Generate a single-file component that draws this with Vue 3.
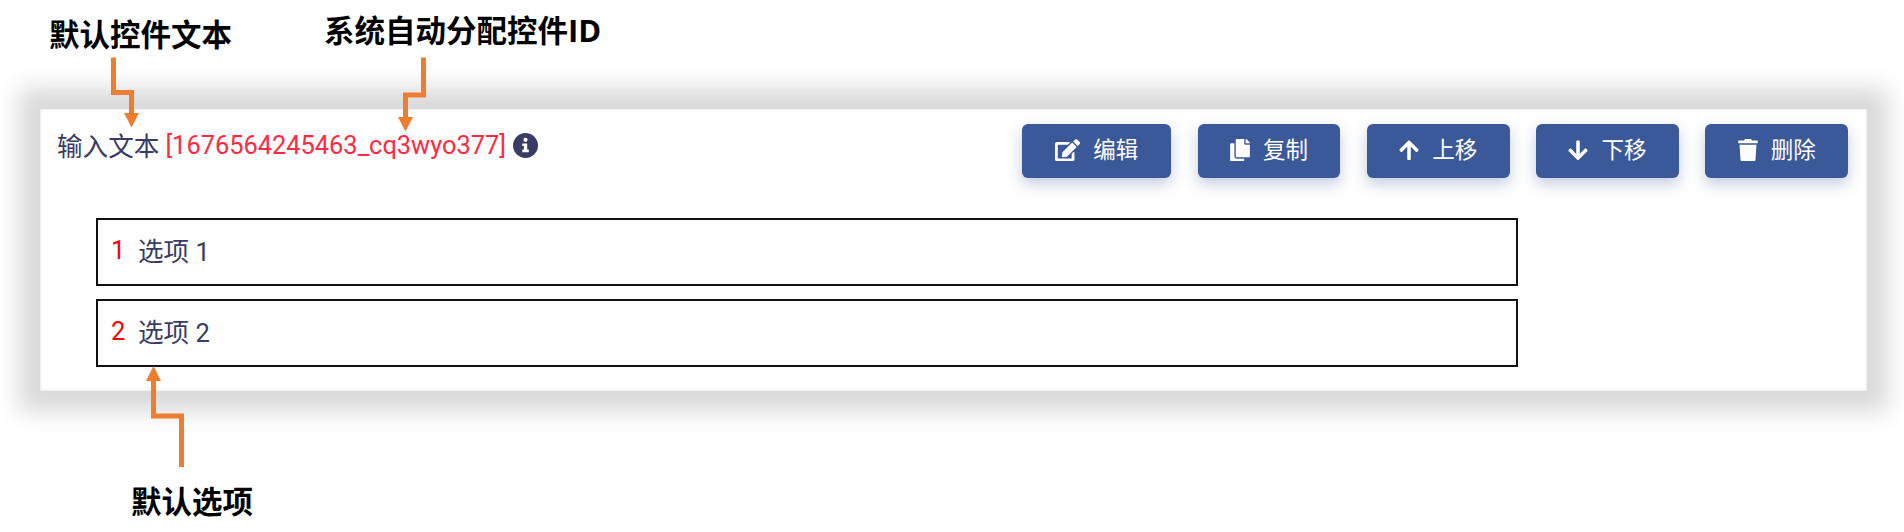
<script setup>
const buttons = [
  { label: '编辑', icon: 'edit', wide: true },
  { label: '复制', icon: 'copy' },
  { label: '上移', icon: 'up' },
  { label: '下移', icon: 'down' },
  { label: '删除', icon: 'trash' },
]
const options = [
  { id: 1, text: '选项 1' },
  { id: 2, text: '选项 2' },
]
</script>

<template>
  <main class="stage">
    <section class="panel">
      <header class="head">
        <div class="title">
          <span class="caption">输入文本</span>
          <span class="uid">[1676564245463_cq3wyo377]</span>
          <svg class="info" viewBox="0 0 25 25">
            <circle cx="12.5" cy="12.5" r="12.5" fill="#3a3c63" />
            <circle cx="12.5" cy="6.8" r="2.1" fill="#fff" />
            <path d="M9.3 10.5h4.9v6.1h1.6v2.6H9.3v-2.6h1.6v-3.5H9.3z" fill="#fff" />
          </svg>
        </div>
        <div class="actions">
          <button v-for="b in buttons" :key="b.icon" class="btn" :class="{ wide: b.wide }">
            <svg v-if="b.icon === 'edit'" class="ic edit" viewBox="0 0 576 512">
              <path d="M402.6 83.2l90.2 90.2c3.8 3.8 3.800 10 0 13.800L274.400 405.600l-92.800 10.300c-12.400 1.400-22.900-9.100-21.500-21.500l10.300-92.800L388.800 83.200c3.800-3.800 10-3.800 13.800 0zm162-22.900l-48.800-48.800c-15.200-15.200-39.900-15.200-55.200 0l-35.400 35.400c-3.800 3.800-3.800 10 0 13.800l90.200 90.200c3.800 3.800 10 3.800 13.800 0l35.400-35.400c15.200-15.300 15.200-40 0-55.200zM384 346.200V448H64V128h229.800c3.200 0 6.200-1.300 8.500-3.500l40-40c7.600-7.600 2.200-20.500-8.500-20.500H48C21.500 64 0 85.500 0 112v352c0 26.500 21.500 48 48 48h352c26.500 0 48-21.500 48-48V306.200c0-10.700-12.900-16-20.500-8.500l-40 40c-2.200 2.300-3.500 5.300-3.500 8.500z" />
            </svg>
            <svg v-else-if="b.icon === 'copy'" class="ic" viewBox="0 0 448 512">
              <path d="M320 448v40c0 13.255-10.745 24-24 24H24c-13.255 0-24-10.745-24-24V120c0-13.255 10.745-24 24-24h72v296c0 30.879 25.121 56 56 56h168zm0-344V0H152c-13.255 0-24 10.745-24 24v368c0 13.255 10.745 24 24 24h272c13.255 0 24-10.745 24-24V128H344c-13.200 0-24-10.800-24-24zm120.971-31.029L375.029 7.029A24 24 0 0 0 358.059 0H352v96h96v-6.059a24 24 0 0 0-7.029-16.970z" />
            </svg>
            <svg v-else-if="b.icon === 'trash'" class="ic" viewBox="0 0 448 512">
              <path d="M432 32H312l-9.400-18.700A24 24 0 0 0 281.100 0H166.800a23.720 23.720 0 0 0-21.400 13.300L136 32H16A16 16 0 0 0 0 48v32a16 16 0 0 0 16 16h416a16 16 0 0 0 16-16V48a16 16 0 0 0-16-16zM53.200 467a48 48 0 0 0 47.900 45h245.800a48 48 0 0 0 47.900-45L416 128H32z" />
            </svg>
            <svg v-else class="ic" :class="b.icon" viewBox="0 0 448 512">
              <path d="M34.900 289.500l-22.200-22.200c-9.400-9.400-9.400-24.600 0-33.900L207 39c9.400-9.400 24.600-9.400 33.900 0l194.300 194.300c9.400 9.400 9.400 24.600 0 33.900L413 289.400c-9.500 9.500-25 9.300-34.300-.4L264 168.600V456c0 13.300-10.700 24-24 24h-32c-13.300 0-24-10.700-24-24V168.600L69.200 289.100c-9.300 9.800-24.800 10-34.300.4z" />
            </svg>
            <span>{{ b.label }}</span>
          </button>
        </div>
      </header>
      <ul class="options">
        <li v-for="o in options" :key="o.id">
          <span class="num">{{ o.id }}</span>
          <span>{{ o.text }}</span>
        </li>
      </ul>
    </section>

    <strong class="note n1">默认控件文本</strong>
    <strong class="note n2">系统自动分配控件<span class="latin">ID</span></strong>
    <strong class="note n3">默认选项</strong>
    <svg class="arrows" viewBox="0 0 1904 532">
      <g fill="none" stroke="#ed7d31" stroke-width="5">
        <path d="M113.500 57.500V92.500H131.500V114" />
        <path d="M423.500 57.500V95H405.500V118" />
        <path d="M181.500 467V416H153.500V380" />
      </g>
      <g fill="#ed7d31">
        <path d="M124 113h15l-7.500 14.500z" />
        <path d="M398 117h15l-7.500 14.500z" />
        <path d="M146 381h15l-7.500-15z" />
      </g>
    </svg>
  </main>
</template>

<style>
body { background: #fff; }
</style>

<style scoped>
.stage {
  position: relative;
  box-sizing: border-box;
  width: 1904px;
  height: 532px;
  padding: 109px 37px 141px 40px;
  overflow: hidden;
  background: #fff;
  font-family: Roboto, "Noto Sans CJK SC", sans-serif;
  color: #3a3c63;
}
.panel {
  box-sizing: border-box;
  height: 282px;
  padding: 15px 19px 0 17px;
  background: #fefefe;
  box-shadow: 0 0 22px 21px #dadada, inset 0 0 3px #dadada;
}
.head {
  display: flex;
  justify-content: space-between;
  align-items: flex-start;
  height: 94px;
}
.title {
  display: flex;
  align-items: center;
  height: 42px;
  font-size: 25.6px;
  white-space: nowrap;
}
.caption { padding-bottom: 2px; }
.uid { margin: 0 6.500px 0 6px; color: #fb2b43; font-size: 25.400px; }
.info { width: 25px; height: 25px; }
.actions { display: flex; gap: 26.500px; }
.btn {
  display: flex;
  align-items: center;
  justify-content: center;
  gap: 13px;
  box-sizing: border-box;
  width: 142.700px;
  height: 54px;
  padding: 0 0 2px;
  border: 0;
  border-radius: 6px;
  background: #3b5998;
  box-shadow: 0 6px 14px rgba(59, 89, 152, .3);
  color: #fff;
  font: 22.500px/1 Roboto, "Noto Sans CJK SC", sans-serif;
}
.wide { width: 149px; }
.ic { width: 20px; height: 22.500px; fill: #fff; }
.edit { width: 25px; }
.down { transform: rotate(180deg); }
.options {
  width: 1422px;
  margin: 0 0 0 39px;
  padding: 0;
  list-style: none;
}
.options li {
  display: flex;
  align-items: center;
  box-sizing: border-box;
  height: 68px;
  margin-bottom: 13px;
  padding: 0 0 5px 13px;
  border: 2px solid #111;
  font-size: 25.600px;
}
.num { width: 27px; padding-top: 1px; color: #f00; }
.note {
  position: absolute;
  color: #000;
  font: 700 30.500px/36px "Noto Sans CJK SC", sans-serif;
  white-space: nowrap;
}
.latin { font-family: "Open Sans", sans-serif; font-size: 31px; line-height: 1; }
.n1 { left: 49px; top: 15px; }
.n2 { left: 324px; top: 11px; }
.n3 { left: 131px; top: 482px; }
.arrows { position: absolute; inset: 0; width: 1904px; height: 532px; pointer-events: none; }
</style>
